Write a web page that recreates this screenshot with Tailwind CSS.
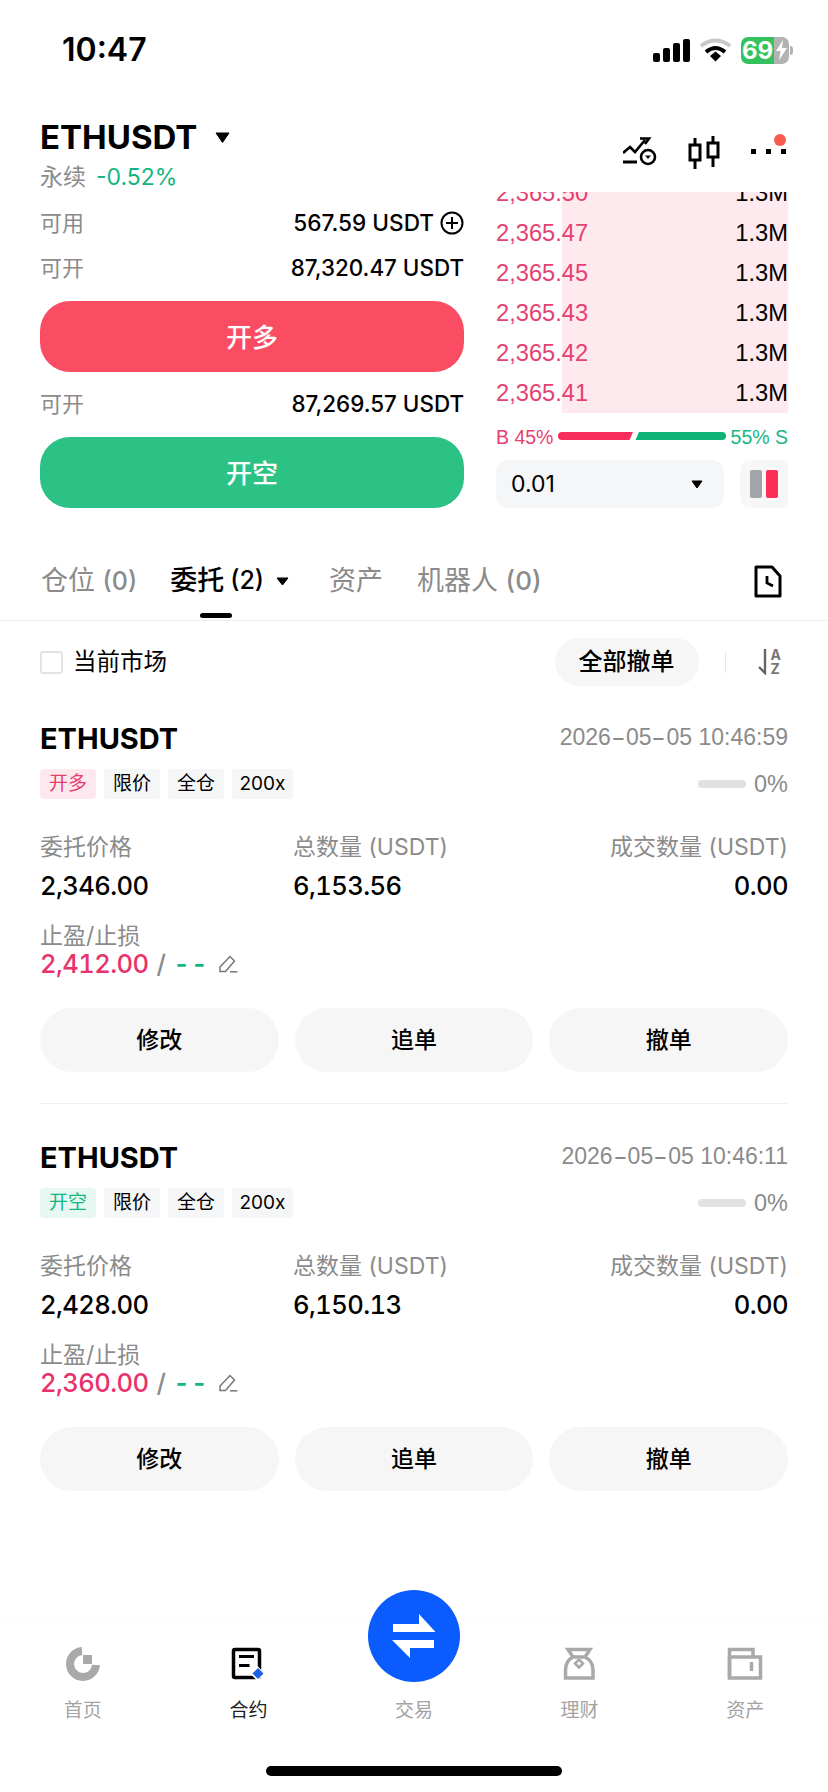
<!DOCTYPE html>
<html lang="zh-CN">
<head>
  <meta charset="UTF-8">
  <title>ETHUSDT</title>
  <meta name="viewport" content="width=device-width, initial-scale=1">
  <script src="https://cdn.jsdelivr.net/npm/@tailwindcss/browser@4"></script>
</head>
<body class="bg-white text-black font-['Inter','Noto_Sans_CJK_SC',sans-serif]">
<div class="relative w-[828px] h-[1792px] overflow-hidden flex flex-col">

  <!-- status bar -->
  <div class="h-[100px] pl-[62px] pr-[35px] flex items-center justify-between shrink-0">
    <span class="text-[32px] font-semibold leading-none">10:47</span>
    <div class="flex items-center">
      <svg width="37" height="23" viewBox="0 0 37 23" fill="#000"><rect x="0" y="14" width="7" height="9" rx="2"/><rect x="10" y="9" width="7" height="14" rx="2"/><rect x="20" y="4" width="7" height="19" rx="2"/><rect x="30" y="0" width="7" height="23" rx="2"/></svg>
      <svg class="ml-[9px]" width="33" height="24" viewBox="0 0 33 24" fill="none"><path d="M2 8 Q16.500 -3 31 8" stroke="#c9c9c9" stroke-width="4"/><path d="M7 14 Q16.500 6 26 14" stroke="#000" stroke-width="4"/><path d="M11 18 L16.500 13.500 L22 18 L16.500 23.500 Z" fill="#000"/></svg>
      <div class="ml-[9px] w-[48px] h-[27px] rounded-[7px] overflow-hidden flex">
        <div class="w-[33px] bg-[#34c25c] text-white text-[24px] font-bold leading-[27px] text-center">69</div>
        <div class="flex-1 bg-[#b3b3b3] flex items-center justify-center">
          <svg width="11" height="20" viewBox="0 0 11 20" fill="#fff"><path d="M7 0 L0 11 H4.500 L3 20 L11 8 H6 Z"/></svg>
        </div>
      </div>
      <div class="w-[3px] h-[9px] ml-[1px] rounded-r-full bg-[#b3b3b3]"></div>
    </div>
  </div>

  <!-- symbol header -->
  <div class="h-[92px] pl-[40px] pr-[42px] flex justify-between shrink-0">
    <div>
      <div class="mt-[17px] h-[40px] flex items-center">
        <span class="text-[33px] font-bold leading-none">ETHUSDT</span>
        <svg class="ml-[18px]" width="15" height="11" viewBox="0 0 15 11" fill="#000"><path d="M1 1 H14 L7.500 10.500 Z" stroke="#000" stroke-linejoin="round"/></svg>
      </div>
      <div class="mt-[6px] h-[28px] flex items-center gap-[10px] text-[23px] leading-none">
        <span class="text-[#8b8b8b]">永续</span>
        <span class="text-[#13b581] text-[23px]">-0.52%</span>
      </div>
    </div>
    <div class="pt-[37px] flex items-start">
      <svg width="36" height="30" viewBox="0 0 36 30" fill="none" stroke="#000" stroke-width="2.600">
        <path d="M0 16 L7 10 L12 15 L22 3"/><path d="M17 1.500 H26 L22 7"/><path d="M0 25 H14" stroke-width="3"/>
        <circle cx="25" cy="20" r="7"/><path d="M22 18.500 H28 L25 22 Z" fill="#000" stroke="none"/>
      </svg>
      <svg class="ml-[29px] -mt-[1px]" width="32" height="33" viewBox="0 0 32 33" fill="none" stroke="#000" stroke-width="3">
        <rect x="2" y="9" width="10" height="15"/><path d="M7 2 V9 M7 24 V33"/>
        <rect x="20" y="7" width="10" height="14"/><path d="M25 0 V7 M25 21 V31"/>
      </svg>
      <div class="ml-[31px] relative w-[35px] h-[20px] flex justify-between items-start pt-[12px]">
        <span class="w-[5px] h-[5px] bg-black"></span>
        <span class="w-[5px] h-[5px] bg-black"></span>
        <span class="w-[5px] h-[5px] bg-black"></span>
        <span class="absolute top-[-3px] right-0 w-[12px] h-[12px] rounded-full bg-[#f95b4e]"></span>
      </div>
    </div>
  </div>

  <!-- trade panel + order book -->
  <div class="h-[348px] px-[40px] flex gap-[32px] shrink-0">
    <div class="w-[424px]">
      <div class="mt-[11px] h-[40px] flex items-center justify-between text-[22px]">
        <span class="text-[#8b8b8b]">可用</span>
        <span class="flex items-center gap-[6px] font-medium text-[22.600px]">567.59 USDT
          <svg width="24" height="24" viewBox="0 0 24 24" fill="none" stroke="#000" stroke-width="2"><circle cx="12" cy="12" r="10.500"/><path d="M12 6 V18 M6 12 H18"/></svg>
        </span>
      </div>
      <div class="mt-[5px] h-[40px] flex items-center justify-between text-[22px]">
        <span class="text-[#8b8b8b]">可开</span>
        <span class="font-medium text-[22.400px]">87,320.47 USDT</span>
      </div>
      <button class="mt-[13px] w-full h-[71px] pt-[2px] rounded-[30px] bg-[#fa4d63] text-white text-[26px] font-medium">开多</button>
      <div class="mt-[12px] h-[40px] flex items-center justify-between text-[22px]">
        <span class="text-[#8b8b8b]">可开</span>
        <span class="font-medium text-[22.400px]">87,269.57 USDT</span>
      </div>
      <button class="mt-[13px] w-full h-[71px] pt-[2px] rounded-[30px] bg-[#2cc286] text-white text-[26px] font-medium">开空</button>
    </div>

    <div class="w-[292px] font-['Liberation_Sans','Noto_Sans_CJK_SC',sans-serif]">
      <div class="relative h-[221px] overflow-hidden">
        <div class="absolute inset-y-0 left-[66px] right-0 bg-[#feeaee]"></div>
        <div class="relative -mt-[18px] text-[23.700px]">
          <div class="h-[40px] flex items-center justify-between"><span class="text-[#e63f70]">2,365.50</span><span>1.3M</span></div>
          <div class="h-[40px] flex items-center justify-between"><span class="text-[#e63f70]">2,365.47</span><span>1.3M</span></div>
          <div class="h-[40px] flex items-center justify-between"><span class="text-[#e63f70]">2,365.45</span><span>1.3M</span></div>
          <div class="h-[40px] flex items-center justify-between"><span class="text-[#e63f70]">2,365.43</span><span>1.3M</span></div>
          <div class="h-[40px] flex items-center justify-between"><span class="text-[#e63f70]">2,365.42</span><span>1.3M</span></div>
          <div class="h-[40px] flex items-center justify-between"><span class="text-[#e63f70]">2,365.41</span><span>1.3M</span></div>
        </div>
      </div>
      <div class="mt-[12px] h-[24px] pt-[2px] flex items-center justify-between text-[19.500px]">
        <span class="text-[#e63f70]">B 45%</span>
        <svg width="168" height="8" viewBox="0 0 168 8" class="-mt-[4px]"><path d="M4 0 H75 L71.500 8 H4 A4 4 0 0 1 4 0 Z" fill="#f72d5b"/><path d="M81 0 H164 A4 4 0 0 1 164 8 H77.500 Z" fill="#10b277"/></svg>
        <span class="text-[#19b584]">55% S</span>
      </div>
      <div class="mt-[11px] flex justify-between">
        <div class="w-[228px] h-[48px] rounded-[12px] bg-[#f5f6f8] pl-[15px] pr-[21px] pt-[1px] flex items-center justify-between">
          <span class="text-[23px] font-['Inter']">0.01</span>
          <svg width="12" height="9" viewBox="0 0 12 9" fill="#000"><path d="M1 1 H11 L6 8 Z" stroke="#000" stroke-linejoin="round"/></svg>
        </div>
        <div class="w-[48px] h-[48px] rounded-l-[10px] bg-[#f7f7f8] pl-[10px] flex items-center gap-[4px]">
          <span class="w-[12px] h-[28px] rounded-[2px] bg-[#a3a4a8]"></span>
          <span class="w-[12px] h-[28px] rounded-[2px] bg-[#fb3059]"></span>
        </div>
      </div>
    </div>
  </div>

  <!-- tabs -->
  <div class="relative h-[81px] pl-[41px] pr-[46px] pt-[2px] border-b border-[#eeeeee] flex items-center text-[27px] text-[#8b8b8b] shrink-0">
    <span>仓位 <span class="text-[25px] font-medium">(0)</span></span>
    <span class="ml-[33px] text-black font-medium flex items-center">委托 <span class="ml-[6px] text-[25px]">(2)</span>
      <svg class="ml-[12px]" width="13" height="9" viewBox="0 0 13 9" fill="#000"><path d="M1 1 H12 L6.500 8 Z" stroke="#000" stroke-linejoin="round"/></svg>
    </span>
    <span class="ml-[40px]">资产</span>
    <span class="ml-[34px]">机器人 <span class="text-[26px] font-medium">(0)</span></span>
    <svg class="ml-auto" width="28" height="33" viewBox="0 0 28 33" fill="none" stroke="#000" stroke-width="3"><path d="M2 2 H18 L26 11 V31 H2 Z" stroke-linejoin="round"/><path d="M13 11 V18 L19 21" stroke-width="2.800"/></svg>
    <span class="absolute left-[200px] bottom-[2px] w-[32px] h-[5px] rounded-full bg-black"></span>
  </div>

  <!-- filter row -->
  <div class="h-[82px] pl-[40px] pr-[47px] flex items-center shrink-0">
    <span class="w-[23px] h-[23px] rounded-[3px] border-2 border-[#e3e3e3]"></span>
    <span class="ml-[10px] text-[23.500px]">当前市场</span>
    <button class="ml-auto w-[144px] h-[48px] rounded-full bg-[#f6f6f6] text-[24px] font-medium">全部撤单</button>
    <span class="ml-[26px] w-[1px] h-[22px] bg-[#e8e8e8]"></span>
    <svg class="ml-[32px]" width="11" height="26" viewBox="0 0 11 26" fill="none" stroke="#666" stroke-width="2.400"><path d="M7 0 V24 L1 18"/></svg>
    <span class="ml-[2px] flex flex-col text-[14px] font-bold leading-[14px] text-[#777777]"><span>A</span><span>Z</span></span>
  </div>

  <!-- orders -->
  <div class="mt-[14px] px-[40px]">
    <div class="border-b border-[#f1f1f1] pb-[31px]">
      <div class="h-[40px] flex items-center justify-between">
        <span class="pt-[3px] text-[29px] font-bold">ETHUSDT</span>
        <span class="pt-[1px] text-[23px] text-[#8b8b8b] font-['Liberation_Sans']">2026<span class="inline-block w-[15px] text-center scale-x-[1.8]">-</span>05<span class="inline-block w-[15px] text-center scale-x-[1.8]">-</span>05 10:46:59</span>
      </div>
      <div class="mt-[12px] h-[30px] flex items-center gap-[8px] text-[19px]">
        <span class="w-[56px] h-[30px] rounded-[4px] bg-[#fde8ed] text-[#e63a6d] flex items-center justify-center">开多</span>
        <span class="w-[56px] h-[30px] rounded-[4px] bg-[#f5f6f8] flex items-center justify-center">限价</span>
        <span class="w-[56px] h-[30px] rounded-[4px] bg-[#f5f6f8] flex items-center justify-center">全仓</span>
        <span class="w-[61px] h-[30px] rounded-[4px] bg-[#f5f6f8] flex items-center justify-center">200x</span>
        <span class="ml-auto w-[48px] h-[8px] rounded-full bg-[#e2e2e2]"></span>
        <span class="pt-[1px] text-[23.500px] text-[#8b8b8b] font-['Liberation_Sans']">0%</span>
      </div>
      <div class="mt-[33px] h-[30px] flex items-center text-[23px] text-[#8b8b8b]">
        <span class="w-[253px]">委托价格</span>
        <span>总数量 (USDT)</span>
        <span class="ml-auto">成交数量 (USDT)</span>
      </div>
      <div class="mt-[6px] h-[36px] flex items-center text-[25.600px] font-medium tabular-nums tracking-[-0.6px]">
        <span class="w-[253px]">2,346.00</span>
        <span>6,153.56</span>
        <span class="ml-auto">0.00</span>
      </div>
      <div class="mt-[18px] h-[28px] flex items-center text-[23px] text-[#8b8b8b]">止盈/止损</div>
      <div class="h-[28px] flex items-center text-[25.600px] font-medium tabular-nums tracking-[-0.6px]">
        <span class="text-[#e8326a]">2,412.00</span>
        <span class="ml-[8px] text-[#8b8b8b]">/</span>
        <span class="ml-[8px] text-[#13b581] font-semibold tracking-[1px]">--</span>
        <svg class="ml-[11px]" width="19" height="18" viewBox="0 0 19 18" fill="none" stroke="#777" stroke-width="1.500"><path d="M1 12 L11 1.500 L15.500 6 L6.500 16.500 H1 Z"/><path d="M11 16.800 H18.500"/></svg>
      </div>
      <div class="mt-[30px] flex gap-[16px] text-[23px] font-medium">
        <button class="flex-1 h-[64px] rounded-full bg-[#f6f6f6]">修改</button>
        <button class="flex-1 h-[64px] rounded-full bg-[#f6f6f6]">追单</button>
        <button class="flex-1 h-[64px] rounded-full bg-[#f6f6f6]">撤单</button>
      </div>
    </div>

    <div class="mt-[32px]">
      <div class="h-[40px] flex items-center justify-between">
        <span class="pt-[3px] text-[29px] font-bold">ETHUSDT</span>
        <span class="pt-[1px] text-[23px] text-[#8b8b8b] font-['Liberation_Sans']">2026<span class="inline-block w-[15px] text-center scale-x-[1.8]">-</span>05<span class="inline-block w-[15px] text-center scale-x-[1.8]">-</span>05 10:46:11</span>
      </div>
      <div class="mt-[12px] h-[30px] flex items-center gap-[8px] text-[19px]">
        <span class="w-[56px] h-[30px] rounded-[4px] bg-[#e6f8f1] text-[#13b581] flex items-center justify-center">开空</span>
        <span class="w-[56px] h-[30px] rounded-[4px] bg-[#f5f6f8] flex items-center justify-center">限价</span>
        <span class="w-[56px] h-[30px] rounded-[4px] bg-[#f5f6f8] flex items-center justify-center">全仓</span>
        <span class="w-[61px] h-[30px] rounded-[4px] bg-[#f5f6f8] flex items-center justify-center">200x</span>
        <span class="ml-auto w-[48px] h-[8px] rounded-full bg-[#e2e2e2]"></span>
        <span class="pt-[1px] text-[23.500px] text-[#8b8b8b] font-['Liberation_Sans']">0%</span>
      </div>
      <div class="mt-[33px] h-[30px] flex items-center text-[23px] text-[#8b8b8b]">
        <span class="w-[253px]">委托价格</span>
        <span>总数量 (USDT)</span>
        <span class="ml-auto">成交数量 (USDT)</span>
      </div>
      <div class="mt-[6px] h-[36px] flex items-center text-[25.600px] font-medium tabular-nums tracking-[-0.6px]">
        <span class="w-[253px]">2,428.00</span>
        <span>6,150.13</span>
        <span class="ml-auto">0.00</span>
      </div>
      <div class="mt-[18px] h-[28px] flex items-center text-[23px] text-[#8b8b8b]">止盈/止损</div>
      <div class="h-[28px] flex items-center text-[25.600px] font-medium tabular-nums tracking-[-0.6px]">
        <span class="text-[#e8326a]">2,360.00</span>
        <span class="ml-[8px] text-[#8b8b8b]">/</span>
        <span class="ml-[8px] text-[#13b581] font-semibold tracking-[1px]">--</span>
        <svg class="ml-[11px]" width="19" height="18" viewBox="0 0 19 18" fill="none" stroke="#777" stroke-width="1.500"><path d="M1 12 L11 1.500 L15.500 6 L6.500 16.500 H1 Z"/><path d="M11 16.800 H18.500"/></svg>
      </div>
      <div class="mt-[30px] flex gap-[16px] text-[23px] font-medium">
        <button class="flex-1 h-[64px] rounded-full bg-[#f6f6f6]">修改</button>
        <button class="flex-1 h-[64px] rounded-full bg-[#f6f6f6]">追单</button>
        <button class="flex-1 h-[64px] rounded-full bg-[#f6f6f6]">撤单</button>
      </div>
    </div>
  </div>

  <!-- bottom nav -->
  <div class="mt-auto h-[170px] border-t border-[#fbfbfb] grid grid-cols-5 text-[19px] text-[#a3a3a3] shrink-0">
    <div class="pt-[24px] flex flex-col items-center">
      <svg width="34" height="34" viewBox="0 0 34 34" fill="none"><path d="M16 4 A13 13 0 1 0 30 18" stroke="#a9a9aa" stroke-width="8"/><rect x="17" y="8" width="9" height="9" fill="#a9a9aa"/></svg>
      <span class="mt-[16px]">首页</span>
    </div>
    <div class="pt-[24px] flex flex-col items-center text-[#222222]">
      <svg width="34" height="34" viewBox="0 0 34 34" fill="none"><rect x="2.500" y="2.500" width="26" height="28" rx="1.500" stroke="#000" stroke-width="3.500"/><path d="M8 9.500 H23 M8 18.500 H18.500" stroke="#000" stroke-width="3"/><path d="M26.500 19 L34 26.500 L26.500 34 L19 26.500 Z" fill="#fff"/><path d="M27 21 L32.500 26.500 L27 32 L21.500 26.500 Z" fill="#1a5fe8"/></svg>
      <span class="mt-[16px]">合约</span>
    </div>
    <div class="pt-[74px] flex flex-col items-center">
      <span>交易</span>
    </div>
    <div class="pt-[24px] flex flex-col items-center">
      <svg width="34" height="34" viewBox="0 0 34 34" fill="none" stroke="#a9a9aa" stroke-width="3.500"><path d="M5 2.500 H27 L22 10 H10 Z"/><path d="M10 10 C4 13 2.500 18 2.500 23 V31 H30 V23 C30 18 28 13 22 10"/><path d="M16 12.500 L20 16.500 L16 20.500 L12 16.500 Z" stroke-width="2.500"/></svg>
      <span class="mt-[16px]">理财</span>
    </div>
    <div class="pt-[24px] flex flex-col items-center">
      <svg width="36" height="34" viewBox="0 0 36 34" fill="none" stroke="#a9a9aa" stroke-width="3.500"><path d="M2.500 31 V2.500 H26 V10"/><path d="M2.500 10 H33.500 V31 H2.500 Z"/><path d="M24.500 15 V24" stroke-width="3.500"/></svg>
      <span class="mt-[16px]">资产</span>
    </div>
  </div>

  <!-- trade button sits over the nav -->
  <div class="absolute left-[368px] top-[1590px] w-[92px] h-[92px] rounded-full bg-[#0a5cff] flex items-center justify-center">
    <svg width="44" height="44" viewBox="0 0 44 44" fill="#fff"><path d="M1 10 H27 V0 L43.500 18 H1 Z"/><path d="M0 26 H42 V34 H18 V44 Z"/></svg>
  </div>
  <div class="absolute left-[266px] top-[1766px] w-[296px] h-[10px] rounded-full bg-black"></div>
</div>
</body>
</html>
